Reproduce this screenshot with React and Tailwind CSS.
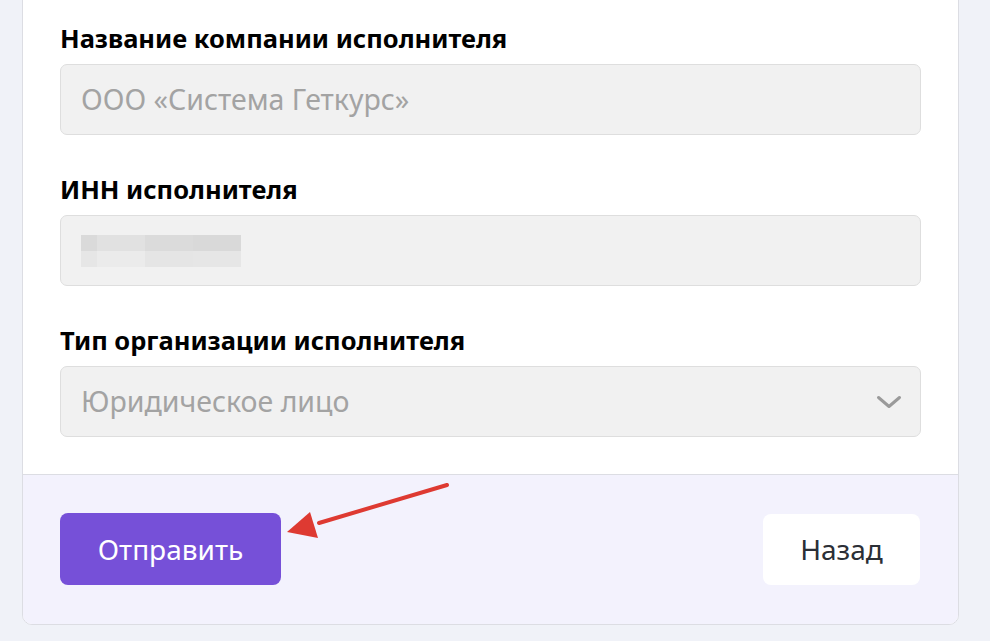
import React from "react";

function Field({ label, children }) {
  return (
    <div className="flex flex-col">
      <div className="text-[25.5px] font-bold leading-[30px] text-black h-[30px] mb-[11px] whitespace-nowrap">{label}</div>
      {children}
    </div>
  );
}

const inputCls =
  "h-[71px] w-full rounded-[7px] border border-[#dedede] bg-[#f1f1f1] flex items-center px-[20px]";

export default function App() {
  return (
    <div
      className="w-[990px] h-[641px] bg-[#f0f2f8] overflow-hidden relative"
      style={{ fontFamily: '"Noto Sans", "Open Sans", sans-serif' }}
    >
      <div className="ml-[22px] w-[937px] -mt-[10px] border border-[#dcdde3] rounded-b-[10px] bg-white overflow-hidden">
        <div className="pt-[32px] pl-[37px] pr-[37px] pb-[37px] flex flex-col gap-[39px]">
          <Field label="Название компании исполнителя">
            <div className={inputCls}>
              <span className="text-[28.5px] text-[#a3a3a3] whitespace-nowrap">ООО «Система Геткурс»</span>
            </div>
          </Field>
          <Field label="ИНН исполнителя">
            <div className={inputCls}>
              <div className="flex flex-col gap-0">
                <div className="flex">
                  <div className="w-[16px] h-[16px] bg-[#dadada]" />
                  <div className="w-[48px] h-[16px] bg-[#e1e1e1]" />
                  <div className="w-[48px] h-[16px] bg-[#dbdbdb]" />
                  <div className="w-[48px] h-[16px] bg-[#d9d9d9]" />
                </div>
                <div className="flex">
                  <div className="w-[16px] h-[16px] bg-[#e6e6e6]" />
                  <div className="w-[48px] h-[16px] bg-[#ebebeb]" />
                  <div className="w-[48px] h-[16px] bg-[#e5e5e5]" />
                  <div className="w-[48px] h-[16px] bg-[#e6e6e6]" />
                </div>
              </div>
            </div>
          </Field>
          <Field label="Тип организации исполнителя">
            <div className={inputCls + " justify-between"}>
              <span className="text-[28.5px] text-[#a3a3a3] whitespace-nowrap">Юридическое лицо</span>
              <svg width="26" height="16" viewBox="0 0 26 16" className="mr-[-2px]">
                <path d="M2.5 3.5 L13 12.5 L23.5 3.5" fill="none" stroke="#9a9a9a" strokeWidth="3" strokeLinecap="round" strokeLinejoin="round" />
              </svg>
            </div>
          </Field>
        </div>
        <div className="relative border-t border-[#dcdde3] bg-[#f3f2fd] pl-[37px] pr-[37px] pt-[38px] pb-[39px] flex items-center justify-between">
          <button className="h-[72px] w-[221px] rounded-[8px] bg-[#7650d8] text-white text-[28px]">
            Отправить
          </button>
          <button className="h-[71px] w-[157px] rounded-[8px] bg-white text-[#2b2f36] text-[28px] mr-[1px]">
            Назад
          </button>
          <svg className="absolute left-[262px] top-[2px]" width="170" height="64" viewBox="0 0 170 64">
            <line x1="162" y1="8" x2="34" y2="46" stroke="#de3a32" strokeWidth="4" strokeLinecap="round" />
            <polygon points="2,55 25,35 33,61" fill="#de3a32" />
          </svg>
        </div>
      </div>
    </div>
  );
}
